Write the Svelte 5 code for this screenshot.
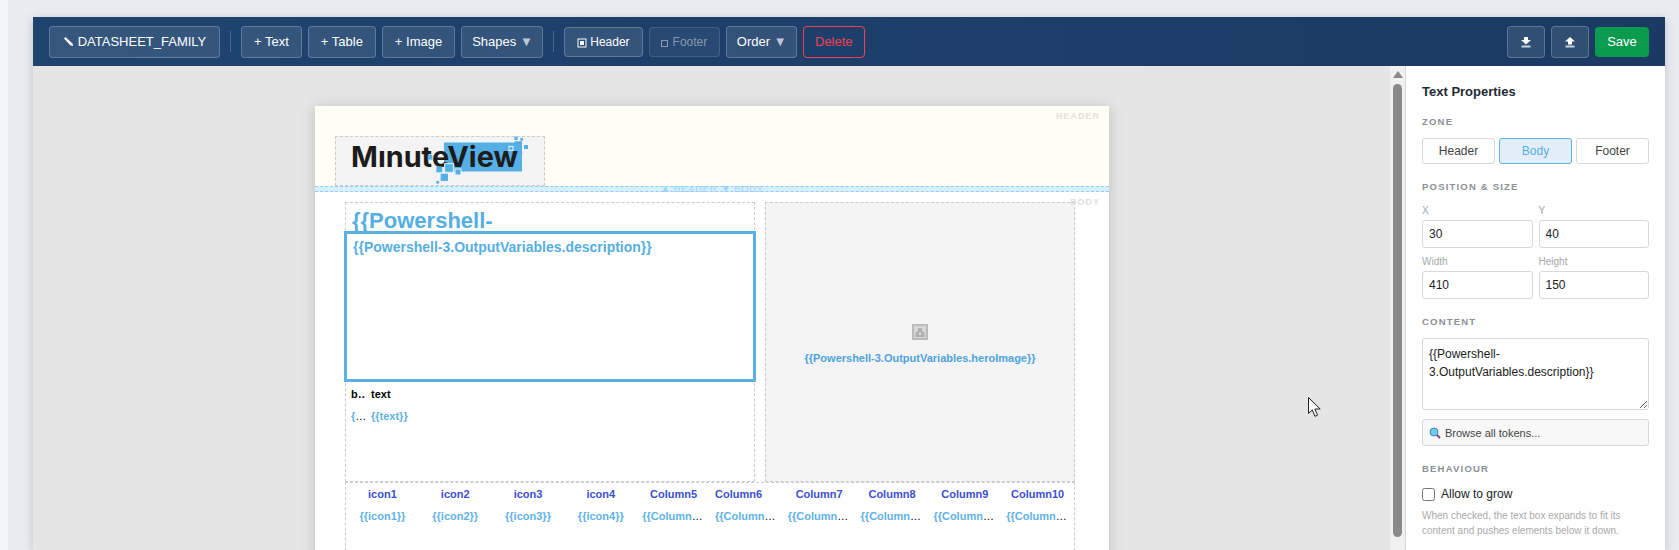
<script lang="ts">
  const headers = ['icon1', 'icon2', 'icon3', 'icon4', 'Column5', 'Column6', 'Column7', 'Column8', 'Column9', 'Column10']
  const zones = ['Header', 'Body', 'Footer']
  // logo confetti: centre x, centre y, size, white outline
  const squares: [number, number, number, boolean][] = [
    [108.3, 40.3, 7.3, false],
    [101.7, 45.3, 2.7, false],
    [113, 31, 8.7, true],
    [103.3, 32.3, 6, false],
    [122, 35, 6, true],
    [94, 20.3, 4.7, false],
    [182.3, 8, 7.5, false],
    [190, 10, 4, false],
    [185.7, 2.3, 2.7, false],
    [180, 1.3, 3.3, false],
    [175, 11.3, 4, true],
    [185.3, 15.7, 2, false],
  ]
  let zone = $state('Body')
  let grow = $state(false)
  let content = $state('{{Powershell-3.OutputVariables.description}}')
</script>

<div class="shell">
  <header class="toolbar">
    <button class="tb name">
      <svg width="11" height="11" viewBox="0 0 11 11"><path d="M1 2.5 2.5 1l7 6.5.5 2.5-2.5-.5z" fill="#fff" /></svg>
      DATASHEET_FAMILY
    </button>
    <i class="sep"></i>
    <button class="tb">+ Text</button>
    <button class="tb">+ Table</button>
    <button class="tb">+ Image</button>
    <button class="tb menu">Shapes <span class="caret">▼</span></button>
    <i class="sep"></i>
    <button class="tb slim zone-on"><span class="zone-icon filled"></span> Header</button>
    <button class="tb slim zone-off"><span class="zone-icon"></span> Footer</button>
    <button class="tb menu">Order <span class="caret">▼</span></button>
    <button class="tb danger">Delete</button>
    <div class="spacer"></div>
    <button class="tb io" aria-label="Download">
      <svg width="12" height="12" viewBox="0 0 12 12"><path d="M4 1h4v3h3L6 8.5 1 4h3z" fill="#fff" /><rect x="1.5" y="9.5" width="9" height="2" fill="#c5d3e2" /></svg>
    </button>
    <button class="tb io" aria-label="Upload">
      <svg width="12" height="12" viewBox="0 0 12 12"><path d="M4 8.5h4v-3h3L6 1 1 5.5h3z" fill="#fff" /><rect x="1.5" y="9.5" width="9" height="2" fill="#c5d3e2" /></svg>
    </button>
    <button class="save">Save</button>
  </header>

  <div class="work">
    <main class="canvas">
      <div class="page">
        <section class="page-head">
          <span class="zone-tag">HEADER</span>
          <div class="logo-box">
            <svg width="208" height="48" viewBox="0 0 208 48">
              <rect x="108" y="5.5" width="78" height="29" fill="#56afe4" />
              <text x="15" y="30" textLength="167" lengthAdjust="spacingAndGlyphs" class="logo-text">MınuteView</text>
              {#each squares as [cx, cy, size, outlined]}
                <rect
                  x={cx - size / 2}
                  y={cy - size / 2}
                  width={size}
                  height={size}
                  fill="#56afe4"
                  stroke={outlined ? '#e8f4fb' : 'none'}
                  stroke-width="1"
                />
              {/each}
            </svg>
          </div>
        </section>
        <div class="divider"><span><b>▲</b> HEADER <b>▼</b> BODY</span></div>
        <section class="page-body">
          <span class="zone-tag body-tag">BODY</span>

          <div class="el title">{'{{Powershell-'}</div>

          <div class="el selected">{'{{Powershell-3.OutputVariables.description}}'}</div>

          <div class="el small-table">
            <table>
              <tbody>
                <tr><th class="narrow"><span>b..</span></th><th>text</th></tr>
                <tr><td class="narrow"><span>{'{…'}</span></td><td><span>{'{{text}}'}</span></td></tr>
              </tbody>
            </table>
          </div>

          <div class="el hero">
            <svg width="16" height="16" viewBox="0 0 16 16" class="hero-icon">
              <rect x="1" y="1" width="14" height="14" fill="#d8d8d8" stroke="#bbb" stroke-width="2" />
              <path d="M3.5 13V8.5l2-1 1-3.500h3l1 3.500 2 1V13z" fill="#b0b0b0" />
              <rect x="7" y="8.500" width="2" height="2.500" fill="#e6e6e6" />
            </svg>
            <span>{'{{Powershell-3.OutputVariables.heroImage}}'}</span>
          </div>

          <div class="el wide-table">
            <table>
              <thead>
                <tr>
                  {#each headers as name, i}
                    <th class:left={i === 5}>{name}</th>
                  {/each}
                </tr>
              </thead>
              <tbody>
                <tr>
                  {#each headers as name, i}
                    <td class:left={i > 3}><span>{`{{${name}}}`}</span></td>
                  {/each}
                </tr>
              </tbody>
            </table>
          </div>
        </section>
      </div>

      <svg class="cursor" width="13" height="21" viewBox="0 0 13 21">
        <path d="M.5.5v16l3.8-3.6 2.6 6.4 2.6-1.1-2.6-6.2h5.3z" fill="#fff" stroke="#222" stroke-width="1" />
      </svg>
    </main>

    <div class="scrollbar">
      <span class="arrow"></span>
      <span class="thumb"></span>
    </div>

    <aside class="panel">
      <h2>Text Properties</h2>

      <h3>ZONE</h3>
      <div class="zones">
        {#each zones as z}
          <button class:active={zone === z} onclick={() => (zone = z)}>{z}</button>
        {/each}
      </div>

      <h3 class="pos">POSITION &amp; SIZE</h3>
      <div class="fields">
        <label><span>X</span><input value="30" /></label>
        <label><span>Y</span><input value="40" /></label>
        <label><span>Width</span><input value="410" /></label>
        <label><span>Height</span><input value="150" /></label>
      </div>

      <h3 class="content">CONTENT</h3>
      <textarea bind:value={content}></textarea>
      <button class="browse">
        <svg width="12" height="12" viewBox="0 0 12 12">
          <line x1="7.5" y1="7.5" x2="11" y2="11" stroke="#7a4b9a" stroke-width="2.2" />
          <circle cx="5" cy="5" r="4" fill="#6fcdec" stroke="#3f86ad" />
        </svg>
        Browse all tokens...
      </button>

      <h3 class="behaviour">BEHAVIOUR</h3>
      <label class="grow"><input type="checkbox" bind:checked={grow} /> Allow to grow</label>
      <p class="help">When checked, the text box expands to fit its content and pushes elements below it down.</p>
    </aside>
  </div>
</div>

<style>
  :global(body) {
    margin: 0;
    height: 550px;
    overflow: hidden;
    background: #e9edf2;
    font-family: "Liberation Sans", Arial, sans-serif;
  }

  .shell {
    margin: 17px 14px 0 33px;
    height: 533px;
    display: flex;
    flex-direction: column;
    box-shadow: 0 2px 10px rgba(0, 0, 0, 0.18);
    position: relative;
  }

  .shell::before {
    content: '';
    position: absolute;
    left: -33px;
    top: -17px;
    bottom: 0;
    width: 8px;
    background: #f3f5f8;
  }

  .toolbar {
    height: 49px;
    flex: none;
    box-sizing: border-box;
    display: flex;
    align-items: center;
    gap: 6px;
    padding: 0 16px;
    background: linear-gradient(90deg, #1f4470, #1a3a63);
  }

  .tb {
    height: 32px;
    box-sizing: border-box;
    padding: 0 12px;
    border: 1px solid rgba(255, 255, 255, 0.22);
    border-radius: 4px;
    background: rgba(255, 255, 255, 0.1);
    color: #fff;
    font: 13px "Liberation Sans", Arial, sans-serif;
    white-space: nowrap;
  }

  .name { width: 171px; padding: 0; display: flex; align-items: center; justify-content: center; gap: 4px; }
  .sep { width: 1px; height: 21px; margin: 0 4px; background: rgba(255, 255, 255, 0.2); }
  .menu { padding: 0 9px 0 10px; }
  .caret { color: #bcc8d6; font-size: 13px; }
  .slim { height: 30px; font-size: 12px; padding: 0; }
  .zone-on { width: 79px; }
  .zone-off { width: 71px; color: rgba(255, 255, 255, 0.45); background: rgba(255, 255, 255, 0.05); border-color: rgba(255, 255, 255, 0.12); }
  .zone-icon { display: inline-block; width: 5px; height: 5px; border: 1px solid currentColor; vertical-align: -1px; margin-right: 1px; }
  .zone-icon.filled { width: 4px; height: 4px; background: #fff; box-shadow: 0 0 0 1.5px #2c4d76, 0 0 0 2.5px #fff; border: 0; margin: 0 3px; vertical-align: 1px; }
  .danger { background: transparent; border-color: #ef4056; color: #ef4056; padding: 0 11.5px; }
  .spacer { flex: 1; }
  .io { width: 38px; padding: 0; display: grid; place-items: center; }
  .save {
    height: 30px;
    width: 54px;
    border: 0;
    border-radius: 4px;
    background: #0a9b4e;
    color: #fff;
    font: 13px "Liberation Sans", Arial, sans-serif;
  }

  .work { flex: 1; display: flex; min-height: 0; }

  .canvas {
    flex: 1;
    position: relative;
    background: #e5e5e5;
    overflow: hidden;
  }

  .page {
    width: 794px;
    margin: 40px 0 0 282px;
    background: #fff;
    box-shadow: 0 2px 14px rgba(0, 0, 0, 0.16);
    height: 700px;
  }

  .page-head {
    height: 80px;
    background: #fffff5;
    position: relative;
  }

  .zone-tag {
    position: absolute;
    right: 9px;
    top: 5px;
    font-size: 9px;
    font-weight: bold;
    letter-spacing: 1px;
    color: #e2e2d6;
  }

  .body-tag { top: 5px; color: #e0e0e0; z-index: 2; }

  .logo-box {
    position: absolute;
    left: 20px;
    top: 30px;
    width: 210px;
    height: 50px;
    box-sizing: border-box;
    border: 1px dashed #ccc;
    background: #f4f4f4;
  }

  .logo-box svg { display: block; overflow: visible; }

  .logo-text {
    font: 700 28px "Inter", "Liberation Sans", sans-serif;
    fill: #1c1c1c;
  }

  .divider {
    height: 6px;
    box-sizing: border-box;
    border-top: 1px dashed #90d0ff;
    border-bottom: 1px dashed #90d0ff;
    background: #d8efff;
    position: relative;
    text-align: center;
    line-height: 0;
  }

  .divider span {
    font-size: 9px;
    letter-spacing: 1px;
    color: #9ad3fb;
  }

  .divider b { font-size: 10px; font-weight: normal; letter-spacing: 0; }

  .page-body { position: relative; }

  .el { position: absolute; box-sizing: border-box; }

  .title {
    left: 30px;
    top: 10px;
    width: 410px;
    height: 280px;
    border: 1px dashed #ccc;
    padding: 5px 6px;
    font-size: 22px;
    font-weight: bold;
    line-height: 26px;
    color: #56afe4;
  }

  .selected {
    left: 29px;
    top: 39px;
    width: 412px;
    height: 151px;
    border: 3px solid #5bb1e5;
    background: #fff;
    padding: 5px 6px;
    font-size: 14px;
    font-weight: bold;
    line-height: 17px;
    color: #56afe4;
  }

  .small-table {
    left: 30px;
    top: 191px;
    width: 410px;
    height: 99px;
  }

  table {
    border-collapse: collapse;
    table-layout: fixed;
    width: 100%;
    font-size: 11px;
  }

  th, td {
    overflow: hidden;
    white-space: nowrap;
    text-overflow: ellipsis;
    font-weight: bold;
    padding: 0 6px;
    height: 22px;
    color: #000;
    text-align: left;
  }

  td { font-weight: normal; }
  td span { color: #5fb3e8; font-weight: bold; }
  .narrow { width: 8px; }

  .hero {
    left: 450px;
    top: 10px;
    width: 310px;
    height: 280px;
    border: 1px dashed #ccc;
    background: #f4f4f4;
    display: flex;
    flex-direction: column;
    align-items: center;
    justify-content: center;
    gap: 12px;
    padding-top: 4px;
    font-size: 11px;
    font-weight: bold;
    color: #4da3e0;
  }

  .wide-table {
    left: 30px;
    top: 290px;
    width: 730px;
    height: 200px;
    border: 1px dashed #ccc;
    padding-top: 0;
  }

  .wide-table th, .wide-table td { text-align: center; padding: 0 5px; }
  .wide-table th { color: #3c4fd6; }
  .wide-table th.left, .wide-table td.left { text-align: left; }

  .cursor {
    position: absolute;
    left: 1275px;
    top: 331px;
  }

  .scrollbar {
    width: 15px;
    flex: none;
    background: #f1f1f1;
    position: relative;
  }

  .arrow {
    position: absolute;
    left: 3px;
    top: 5px;
    border: 5px solid transparent;
    border-top: 0;
    border-bottom: 7px solid #8a8a8a;
  }

  .thumb {
    position: absolute;
    left: 3px;
    top: 18px;
    width: 9px;
    height: 453px;
    border-radius: 5px;
    background: #8a8a8a;
  }

  .panel {
    width: 260px;
    flex: none;
    box-sizing: border-box;
    border-left: 1px solid #d8d8d8;
    background: #fff;
    padding: 18px 16px 0;
    color: #222;
  }

  h2 {
    margin: 0;
    font-size: 13px;
    font-weight: bold;
    line-height: 16px;
    color: #1f2933;
  }

  h3 {
    margin: 16px 0 10px;
    font-size: 9.5px;
    font-weight: bold;
    letter-spacing: 1.2px;
    line-height: 12px;
    color: #8b8f95;
  }

  .zones { display: grid; grid-template-columns: repeat(3, 1fr); gap: 4px; }

  .zones button {
    height: 26px;
    border: 1px solid #d8d8d8;
    border-radius: 3px;
    background: #fff;
    color: #444;
    font: 12px "Liberation Sans", Arial, sans-serif;
    padding: 0;
  }

  .zones button.active { background: #e3eef9; border-color: #5bb1e5; color: #56afe4; }

  .pos { margin-top: 17px; margin-bottom: 12px; }

  .fields {
    display: grid;
    grid-template-columns: 1fr 1fr;
    gap: 8px 6px;
  }

  .fields label { display: grid; gap: 3px; }
  .fields span { font-size: 10px; color: #a5a8ad; line-height: 12px; }

  .fields input, textarea {
    box-sizing: border-box;
    width: 100%;
    border: 1px solid #d8d8d8;
    border-radius: 3px;
    padding: 0 6px;
    height: 28px;
    font: 12px "Liberation Sans", Arial, sans-serif;
    color: #222;
    background: #fff;
    outline: none;
  }

  .content { margin-top: 17px; }

  textarea {
    display: block;
    height: 72px;
    padding: 6px;
    line-height: 18px;
    resize: vertical;
  }

  .browse {
    display: flex;
    align-items: center;
    gap: 4px;
    width: 100%;
    height: 27px;
    margin-top: 9px;
    box-sizing: border-box;
    border: 1px solid #d8d8d8;
    border-radius: 3px;
    background: #f8f8f8;
    color: #444;
    font: 11px "Liberation Sans", Arial, sans-serif;
    text-align: left;
    padding: 0 6px;
  }

  .behaviour { margin-top: 17px; }

  .grow {
    display: flex;
    align-items: center;
    gap: 6px;
    font-size: 12px;
    line-height: 14px;
    color: #222;
    margin-top: 12px;
  }

  .grow input { margin: 0; width: 13px; height: 13px; }

  .help {
    margin: 7px 0 0;
    font-size: 10px;
    line-height: 15px;
    color: #aaa;
  }
</style>
